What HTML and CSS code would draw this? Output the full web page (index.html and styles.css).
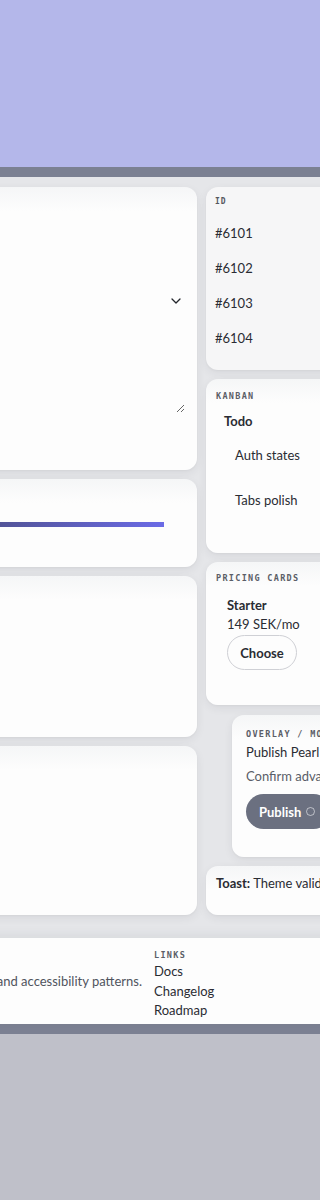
FILE: index.html
```html
<!DOCTYPE html>
<html lang="en">
<head>
<meta charset="utf-8">
<title>Pearl UI Gallery</title>
<link rel="stylesheet" href="styles.css">
</head>
<body>
<header class="hero"></header>
<div class="shell">
  <main class="board">
    <div class="col">
      <section class="card card-form">
        <div class="field">
          <span class="field-label">Project name</span>
          <div class="input">Pearl dashboard</div>
        </div>
        <div class="field">
          <span class="field-label">Status</span>
          <div class="select">
            <span>Active</span>
            <svg class="chev" width="10" height="6" viewBox="0 0 10 6"><path d="M1 1l4 4 4-4" fill="none" stroke="#22252b" stroke-width="1.3" stroke-linecap="round" stroke-linejoin="round"/></svg>
          </div>
        </div>
        <div class="field">
          <span class="field-label">Notes</span>
          <textarea class="textarea" aria-label="Notes"></textarea>
        </div>
      </section>
      <section class="card card-progress">
        <span class="field-label">Upload progress</span>
        <div class="track"><div class="fill" style="width:93.7%"></div></div>
      </section>
      <section class="card card-c3"><span class="field-label">Tabs</span></section>
      <section class="card card-c4"><span class="field-label">Accordion</span></section>
    </div>

    <div class="col col-right">
      <section class="card card-table">
        <table class="table">
          <thead><tr><th>ID</th></tr></thead>
          <tbody>
            <tr><td>#6101</td></tr>
            <tr><td>#6102</td></tr>
            <tr><td>#6103</td></tr>
            <tr><td>#6104</td></tr>
          </tbody>
        </table>
      </section>

      <section class="card card-kanban">
        <h3 class="eyebrow">Kanban</h3>
        <div class="kcol">
          <h4 class="kcol-title">Todo</h4>
          <div class="kitem">Auth states</div>
          <div class="kitem">Tabs polish</div>
        </div>
      </section>

      <section class="card card-pricing">
        <h3 class="eyebrow">Pricing cards</h3>
        <div class="plan">
          <div class="plan-name">Starter</div>
          <div class="plan-price">149 SEK/mo</div>
          <button class="btn-outline">Choose</button>
        </div>
      </section>

      <section class="card card-overlay">
        <h3 class="eyebrow eyebrow-ov">Overlay / Modal</h3>
        <div class="ov-title">Publish Pearl</div>
        <div class="ov-text">Confirm advanced publish settings.</div>
        <button class="btn-solid">Publish <span class="spinner"></span></button>
      </section>

      <section class="card card-toast">
        <p><strong>Toast:</strong> Theme validated successfully.</p>
      </section>
    </div>
  </main>

  <footer class="footer">
    <p class="blurb"><span>Built for theming and accessibility patterns.</span></p>
    <nav class="links">
      <h3 class="eyebrow">Links</h3>
      <a href="#">Docs</a>
      <a href="#">Changelog</a>
      <a href="#">Roadmap</a>
    </nav>
  </footer>
</div>
</body>
</html>
```

FILE: styles.css
```css
html, body {
  margin: 0;
  padding: 0;
  overflow-x: hidden;
}
body {
  background: #bfc0c9;
  font-family: Lato, "Noto Sans", sans-serif;
  font-size: 13px;
  color: #2a2c33;
}
.hero {
  height: 167px;
  background: #b4b7ea;
}
.shell {
  border-top: 10px solid #7b8092;
  border-bottom: 10px solid #7b8092;
  background: #e5e6e9;
  display: flex;
  flex-direction: column;
  align-items: center;
}
.board {
  width: 640px;
  flex: none;
  display: grid;
  grid-template-columns: 357px 274px;
  column-gap: 9px;
  padding: 10px 0 23px;
}
.col {
  display: flex;
  flex-direction: column;
  gap: 9px;
}
.card {
  box-sizing: border-box;
  background: linear-gradient(#f5f6f7, #fdfdfd 24px);
  border-radius: 12px;
  box-shadow: 0 3px 10px rgba(40, 44, 60, 0.07), 0 1px 2px rgba(40, 44, 60, 0.04);
}
.field-label {
  display: block;
  font-size: 12px;
  line-height: 14px;
  color: #5a5e68;
}

/* left column */
.card-form {
  height: 283px;
  padding: 14px 12px;
  display: flex;
  flex-direction: column;
  gap: 10px;
}
.field {
  display: flex;
  flex-direction: column;
  gap: 4px;
}
.input, .select {
  height: 36px;
  box-sizing: border-box;
  display: flex;
  align-items: center;
  padding: 0 4px 0 12px;
  color: #2a2c33;
  background: #fdfdfd;
  border-radius: 10px;
}
.select {
  justify-content: space-between;
}
.chev { display: block; }
.textarea {
  height: 66px;
  box-sizing: border-box;
  border: none;
  border-radius: 10px;
  background: transparent;
  resize: vertical;
  font: inherit;
  outline: none;
}
.card-progress {
  height: 88px;
  padding: 14px 12px;
}
.track {
  margin-top: 15px;
  height: 5px;
}
.fill {
  height: 100%;
  background: linear-gradient(90deg, #3c3f52, #6b6be6);
}
.card-c3 { height: 161px; padding: 14px 12px; }
.card-c4 { height: 169px; padding: 14px 12px; }

/* right column */
.eyebrow {
  margin: 0;
  font-family: "DejaVu Sans Mono", "Liberation Mono", monospace;
  font-weight: 700;
  font-size: 8.5px;
  line-height: 14px;
  letter-spacing: 1.3px;
  text-transform: uppercase;
  color: #5b5e67;
  white-space: nowrap;
}
.card-table {
  height: 183px;
  background: #f6f6f7;
  padding: 6px 0 0 9px;
}
.table {
  border-collapse: collapse;
}
.table th {
  text-align: left;
  font-family: "DejaVu Sans Mono", "Liberation Mono", monospace;
  font-size: 8px;
  font-weight: 700;
  letter-spacing: 1px;
  color: #55585f;
  height: 16px;
  padding: 0 0 6px;
}
.table td {
  height: 35px;
  padding: 0;
  font-size: 13px;
  color: #2a2c33;
}
.card-kanban {
  height: 174px;
  padding: 10px 10px;
}
.kcol {
  padding: 9px 8px 0;
}
.kcol-title {
  margin: 0 0 7px;
  font-size: 13px;
  line-height: 18px;
  font-weight: 700;
}
.kitem {
  padding: 9px 11px;
  line-height: 18px;
  margin-bottom: 9px;
}
.card-pricing {
  height: 143px;
  padding: 9px 10px;
}
.plan {
  padding: 11px 11px 0;
}
.plan-name {
  font-weight: 700;
  line-height: 19px;
}
.plan-price {
  line-height: 19px;
}
.btn-outline {
  margin-top: 1px;
  width: 70px;
  height: 35px;
  border: 1px solid #cfd0d5;
  border-radius: 18px;
  background: #fdfdfd;
  font: 700 13px Lato, "Noto Sans", sans-serif;
  color: #2a2c33;
}
.card-overlay {
  width: 222px;
  height: 142px;
  margin: 1px auto 0;
  padding: 12px 14px;
  white-space: nowrap;
}
.eyebrow-ov {
  margin-bottom: 2px;
}
.ov-title {
  line-height: 19px;
}
.ov-text {
  margin-top: 5px;
  line-height: 19px;
  color: #5a5e68;
}
.btn-solid {
  margin-top: 8px;
  height: 35px;
  padding: 0 16px 0 13px;
  border: none;
  border-radius: 18px;
  background: #6b7080;
  color: #fff;
  font: 700 13px Lato, "Noto Sans", sans-serif;
  display: inline-flex;
  align-items: center;
  gap: 5px;
  white-space: nowrap;
}
.spinner {
  width: 7px;
  height: 7px;
  border: 1.5px solid rgba(255, 255, 255, 0.55);
  border-radius: 50%;
}
.card-toast {
  height: 49px;
  padding: 8px 10px;
}
.card-toast p {
  margin: 0;
  line-height: 18px;
  white-space: nowrap;
}

/* footer */
.footer {
  width: 640px;
  flex: none;
  box-sizing: border-box;
  display: grid;
  grid-template-columns: 302px auto;
  column-gap: 12px;
  align-items: center;
  padding: 10px 0 3px;
  background: #fdfdfd;
  box-shadow: 0 -4px 10px rgba(40, 44, 60, 0.06);
}
.blurb {
  margin: 0 0 6px;
  display: flex;
  justify-content: flex-end;
  white-space: nowrap;
  color: #50545d;
}
.links {
  display: flex;
  flex-direction: column;
}
.links a {
  color: #2a2c33;
  text-decoration: none;
  line-height: 19.5px;
}
```
